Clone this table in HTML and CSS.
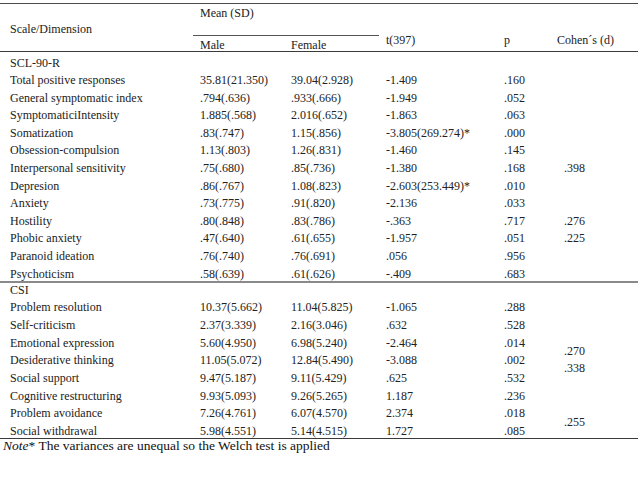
FILE: index.html
```html
<!DOCTYPE html>
<html>
<head>
<meta charset="utf-8">
<title>SCL-90-R and CSI by sex</title>
<link rel="stylesheet" href="styles.css">
</head>
<body>
<table class="stats">
  <colgroup>
    <col class="c-label"><col class="c-male"><col class="c-female"><col class="c-t"><col class="c-p"><col class="c-d">
  </colgroup>
  <thead>
    <tr class="h1">
      <th rowspan="2" class="scale">Scale/Dimension</th>
      <th colspan="2" class="mean">Mean (SD)</th>
      <th rowspan="2" class="low">t(397)</th>
      <th rowspan="2" class="low">p</th>
      <th rowspan="2" class="low cohen">Cohen´s (d)</th>
    </tr>
    <tr class="h2">
      <th class="sub">Male</th>
      <th class="sub">Female</th>
    </tr>
  </thead>
  <tbody class="scl">
    <tr class="first"><td class="label">SCL-90-R</td><td></td><td></td><td></td><td></td><td></td></tr>
    <tr><td class="label">Total positive responses</td><td>35.81(21.350)</td><td>39.04(2.928)</td><td>-1.409</td><td>.160</td><td></td></tr>
    <tr><td class="label">General symptomatic index</td><td>.794(.636)</td><td>.933(.666)</td><td>-1.949</td><td>.052</td><td></td></tr>
    <tr><td class="label">SymptomaticiIntensity</td><td>1.885(.568)</td><td>2.016(.652)</td><td>-1.863</td><td>.063</td><td></td></tr>
    <tr><td class="label">Somatization</td><td>.83(.747)</td><td>1.15(.856)</td><td>-3.805(269.274)*</td><td>.000</td><td></td></tr>
    <tr><td class="label">Obsession-compulsion</td><td>1.13(.803)</td><td>1.26(.831)</td><td>-1.460</td><td>.145</td><td></td></tr>
    <tr><td class="label">Interpersonal sensitivity</td><td>.75(.680)</td><td>.85(.736)</td><td>-1.380</td><td>.168</td><td>.398</td></tr>
    <tr><td class="label">Depresion</td><td>.86(.767)</td><td>1.08(.823)</td><td>-2.603(253.449)*</td><td>.010</td><td></td></tr>
    <tr><td class="label">Anxiety</td><td>.73(.775)</td><td>.91(.820)</td><td>-2.136</td><td>.033</td><td></td></tr>
    <tr><td class="label">Hostility</td><td>.80(.848)</td><td>.83(.786)</td><td>-.363</td><td>.717</td><td>.276</td></tr>
    <tr><td class="label">Phobic anxiety</td><td>.47(.640)</td><td>.61(.655)</td><td>-1.957</td><td>.051</td><td>.225</td></tr>
    <tr><td class="label">Paranoid ideation</td><td>.76(.740)</td><td>.76(.691)</td><td>.056</td><td>.956</td><td></td></tr>
    <tr class="last"><td class="label">Psychoticism</td><td>.58(.639)</td><td>.61(.626)</td><td>-.409</td><td>.683</td><td></td></tr>
  </tbody>
  <tbody class="csi">
    <tr class="first"><td class="label">CSI</td><td></td><td></td><td></td><td></td><td></td></tr>
    <tr><td class="label">Problem resolution</td><td>10.37(5.662)</td><td>11.04(5.825)</td><td>-1.065</td><td>.288</td><td></td></tr>
    <tr><td class="label">Self-criticism</td><td>2.37(3.339)</td><td>2.16(3.046)</td><td>.632</td><td>.528</td><td></td></tr>
    <tr><td class="label">Emotional expression</td><td>5.60(4.950)</td><td>6.98(5.240)</td><td>-2.464</td><td>.014</td>
      <td rowspan="3" class="pair"><div class="pv">.270</div><div class="pv">.338</div></td></tr>
    <tr><td class="label">Desiderative thinking</td><td>11.05(5.072)</td><td>12.84(5.490)</td><td>-3.088</td><td>.002</td></tr>
    <tr><td class="label">Social support</td><td>9.47(5.187)</td><td>9.11(5.429)</td><td>.625</td><td>.532</td></tr>
    <tr><td class="label">Cognitive restructuring</td><td>9.93(5.093)</td><td>9.26(5.265)</td><td>1.187</td><td>.236</td><td></td></tr>
    <tr><td class="label">Problem avoidance</td><td>7.26(4.761)</td><td>6.07(4.570)</td><td>2.374</td><td>.018</td>
      <td rowspan="2" class="span2">.255</td></tr>
    <tr class="last"><td class="label">Social withdrawal</td><td>5.98(4.551)</td><td>5.14(4.515)</td><td>1.727</td><td>.085</td></tr>
  </tbody>
</table>
<p class="note"><em>Note</em>* The variances are unequal so the Welch test is applied</p>
</body>
</html>
```

FILE: styles.css
```css
html, body {
  margin: 0;
  padding: 0;
  background: #fff;
}

body {
  font-family: "Liberation Serif", "Times New Roman", serif;
  font-size: 12px;
  color: #222;
}

.stats {
  width: 638px;
  margin-top: 3px;
  table-layout: fixed;
  border-collapse: separate;
  border-spacing: 0;
}

.c-label { width: 193px; }
.c-male { width: 91px; }
.c-female { width: 95px; }
.c-t { width: 118px; }
.c-p { width: 60px; }
.c-d { width: 81px; }

.stats th {
  font-weight: normal;
  text-align: left;
  vertical-align: top;
  line-height: 14px;
  padding: 0 0 0 7px;
}

.h1 th {
  border-top: 1px solid #4a4a4a;
}

.stats th.scale {
  padding: 18px 0 0 10px;
  border-bottom: 1px solid #3a3a3a;
}

.stats th.mean {
  padding: 2px 0 15px 7px;
  border-bottom: 1px solid #555;
}

.stats th.low {
  padding-top: 29px;
  border-bottom: 1px solid #3a3a3a;
}

.stats th.cohen {
  padding-left: 0;
}

.stats th.sub {
  padding-top: 4px;
  line-height: 11px;
  border-bottom: 1px solid #3a3a3a;
}

.stats td {
  text-align: left;
  vertical-align: top;
  line-height: 14px;
  padding: 1.8px 0 1.8px 7px;
  white-space: nowrap;
}

.stats td.label {
  padding-left: 10px;
}

.scl tr.first td {
  padding-top: 3.5px;
}

.scl tr.last td {
  padding-bottom: 0;
  border-bottom: 2px solid #8a8a8a;
}

.csi td {
  padding-top: 1.85px;
  padding-bottom: 1.85px;
}

.csi tr.first td {
  padding-top: 0;
}

.csi tr.last td {
  padding-bottom: 0;
  border-bottom: 1px solid #3a3a3a;
}

.stats td.pair {
  vertical-align: middle;
  padding-top: 0;
  padding-bottom: 0;
}

.pv {
  line-height: 17.7px;
}

.stats td.span2 {
  vertical-align: top;
  padding-top: 10.8px;
  border-bottom: 1px solid #3a3a3a;
}

.note {
  margin: 0;
  padding-left: 3px;
  line-height: 14px;
  font-size: 13.5px;
  color: #111;
}

.note em {
  font-style: italic;
}
```
